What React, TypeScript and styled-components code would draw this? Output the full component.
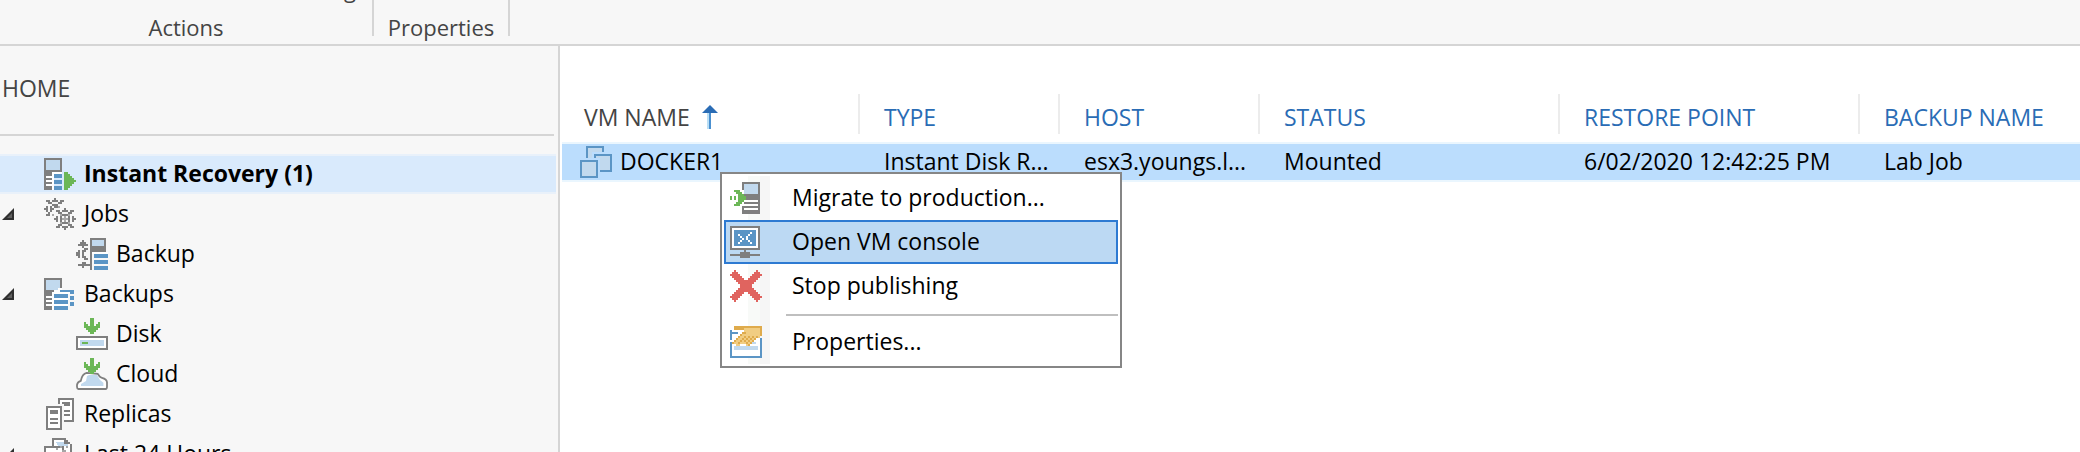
import React from "react";
import styled, { createGlobalStyle, css } from "styled-components";

const GRAY = "#7f7f7f";
const BLUE = "#5b95c5";
const PALE = "#c1d9ee";
const GREEN = "#6cb757";

const GlobalStyle = createGlobalStyle`
  *, *::before, *::after { box-sizing: border-box; }
  html, body, #root { height: 100%; margin: 0; }
  body {
    overflow: hidden;
    background: #fff;
    color: #000;
    font: 23px/32px "Open Sans", "Noto Sans", sans-serif;
  }
  button { font: inherit; color: inherit; background: none; border: 0; padding: 0; margin: 0; text-align: left; }
  a { color: inherit; text-decoration: none; }
`;

const Shell = styled.div`
  height: 100%;
  display: flex;
  flex-direction: column;
`;

const Ribbon = styled.header`
  flex: none;
  height: 46px;
  display: flex;
  overflow: hidden;
  background: #f7f7f7;
  border-bottom: 2px solid #d5d5d5;
  color: #444;
  font-size: 22px;
  line-height: 24px;
`;

const RibbonGroup = styled.section<{ $width: number }>`
  flex: none;
  width: ${(p) => p.$width}px;
  display: flex;
  flex-direction: column;
  justify-content: flex-end;
  align-items: center;
  gap: 14px;
  padding-bottom: 5px;
`;

const RibbonTool = styled.button`
  align-self: flex-end;
  margin-right: 16px;
`;

const RibbonCaption = styled.div`
  text-align: center;
`;

const RibbonRule = styled.div`
  flex: none;
  width: 2px;
  height: 36px;
  background: #d5d5d5;
`;

const Body = styled.div`
  flex: 1;
  min-height: 0;
  display: flex;
`;

const Sidebar = styled.nav`
  flex: none;
  width: 560px;
  overflow: hidden;
  background: #f7f7f7;
  border-right: 2px solid #d5d5d5;
`;

const SidebarTitle = styled.h1`
  height: 90px;
  margin: 0 4px 18px 0;
  padding: 26px 0 0 2px;
  border-bottom: 2px solid #d5d5d5;
  color: #444;
  font-size: 23px;
  font-weight: 400;
`;

const Tree = styled.ul`
  margin: 0 2px 0 0;
  padding: 0;
  list-style: none;
`;

const Node = styled.li<{ $level: number; $selected?: boolean }>`
  height: 40px;
  display: flex;
  align-items: center;
  padding-left: ${(p) => (p.$level - 1) * 32}px;
  ${(p) =>
    p.$selected &&
    css`
      background: #d9eafc;
      box-shadow: inset 0 2px #e9f1fa, inset 0 -2px #e9f1fa;
      font-weight: 700;
    `}
`;

const Twisty = styled.button`
  width: 44px;
  height: 40px;
  display: flex;
  align-items: center;
  padding-left: 2px;
`;

const Indent = styled.span`
  width: 44px;
`;

const NodeLink = styled.a`
  display: flex;
  align-items: center;
  gap: 8px;
  white-space: nowrap;
`;

const Label = styled.span`
  padding-bottom: 2px;
`;

const Main = styled.main`
  flex: 1;
  min-width: 0;
  overflow: hidden;
  padding: 48px 0 0 2px;
`;

const Grid = styled.table`
  width: 100%;
  table-layout: fixed;
  border-collapse: separate;
  border-spacing: 0;
`;

const Col = styled.col<{ $width?: number }>`
  width: ${(p) => (p.$width ? `${p.$width}px` : "auto")};
`;

const HeadCell = styled.th`
  height: 48px;
  padding: 0 0 8px;
  font-weight: 400;

  &:last-child > button { border-right: 0; }
`;

const SortButton = styled.button<{ $sorted?: boolean }>`
  width: 100%;
  height: 40px;
  display: flex;
  align-items: center;
  gap: 12px;
  padding: 5px 0 0 ${(p) => (p.$sorted ? 22 : 24)}px;
  border-right: 2px solid #ececec;
  color: ${(p) => (p.$sorted ? "#444" : "#2a6cb5")};
  white-space: nowrap;
`;

const Cell = styled.td`
  height: 40px;
  padding: 0 0 2px 24px;
  background: #bbddfd;
  border: solid #eaf6fe;
  border-width: 2px 0;
  white-space: nowrap;

  &:first-child { padding: 0 0 0 18px; }
`;

const NameCell = styled.div`
  display: flex;
  align-items: center;
  gap: 8px;
`;

const Menu = styled.div`
  position: absolute;
  left: 720px;
  top: 172px;
  width: 402px;
  padding: 2px;
  border: 2px solid #868686;
  background: linear-gradient(
    90deg,
    #fff 24px, #f8faf8 24px, #f8faf8 36px, #f6f6f6 36px, #f6f6f6 46px, #fff 46px
  ) content-box, #fff;
`;

const MenuItem = styled.button<{ $active?: boolean }>`
  width: 100%;
  height: 44px;
  display: flex;
  align-items: center;
  gap: 30px;
  padding-left: 4px;
  border: 2px solid ${(p) => (p.$active ? "#2d7ad2" : "transparent")};
  background: ${(p) => (p.$active ? "#bcd9f3" : "none")};
`;

const MenuRule = styled.hr`
  height: 2px;
  margin: 6px 0 4px 62px;
  border: 0;
  background: #bfbfbf;
`;

const IconSvg = styled.svg`
  flex: none;
  width: 32px;
  height: 32px;
  display: block;
`;

function Icon({ children, smooth }: { children: React.ReactNode; smooth?: boolean }) {
  return (
    <IconSvg viewBox="0 0 16 16" aria-hidden="true" shapeRendering={smooth ? "auto" : "crispEdges"}>
      {children}
    </IconSvg>
  );
}

const ServerBase = () => (
  <>
    <path fill={GRAY} d="M0 0h9v7H4v9H0z" />
    <path fill={PALE} d="M1 1h7v5H1z" />
    <path fill="#fff" d="M1 9h3v1H1zM1 11h3v1H1zM1 13h3v1H1zM4 7h5v1H5v8H4z" />
  </>
);

const RecoveryIcon = () => (
  <Icon>
    <ServerBase />
    <path fill={BLUE} d="M5 8h4v2H5zM5 11h4v2H5zM5 14h4v2H5z" />
    <path fill={GREEN} d="M10 7h2v1h1v1h1v1h1v1h1v1h-1v1h-1v1h-1v1h-1v1h-2z" />
  </Icon>
);

const BackupsIcon = () => (
  <Icon>
    <ServerBase />
    <path fill="#fff" d="M4 7h1V6h2V5h8v11H5V8H4z" />
    <path fill="#f7f7f7" d="M9 5h6v1H9zM12 8h3v8h-3z" />
    <path
      fill={BLUE}
      d="M8 6h7v2h-2V7H8zM5 8h7v2H5zM5 11h7v2H5zM5 14h7v2H5zM13 9h2v2h-2zM13 12h2v2h-2z"
    />
  </Icon>
);

const GearsIcon = () => (
  <Icon>
    <path
      fill={GRAY}
      d="M5 0h1v2H5zM4 1h3v1H4zM1 1h2v1h1v1H2V2H1zM8 1h2v1H9v1H7V2h1zM0 5h2v1H0zM1 4h1v3H1zM1 8h2v1H1zM2 7h1v1H2zM4 3h3v1H4zM3 4h1v3H3zM4 5h1v1H4zM5 4h2v1H5z"
    />
    <path
      fill={GRAY}
      d="M10 5h1v2h-1zM9 6h3v1H9zM10 14h1v2h-1zM9 14h3v1H9zM5 10h2v1H5zM6 9h1v3H6zM14 10h2v1h-2zM14 9h1v3h-1zM6 6h2v1h1v1H7V7H6zM13 6h2v1h-1v1h-2V7h1zM7 13h2v1H8v1H6v-1h1zM12 13h2v1h1v1h-2v-1h-1z"
    />
    <path fill={GRAY} d="M9 8h3v1H9zM8 9h1v3H8zM12 9h1v3h-1zM9 12h3v1H9z" />
    <path fill="#a9a9a9" d="M10 9h1v1h1v1h-1v1h-1v-1H9v-1h1zM8 8h1v1H8zM12 8h1v1h-1zM8 12h1v1H8zM12 12h1v1h-1zM4 8h1v1H4zM7 4h1v1H7z" />
  </Icon>
);

const JobIcon = () => (
  <Icon>
    <path fill={GRAY} d="M7 0h8v7H8v9H7v-2H6v-1h1z" />
    <path fill={PALE} d="M8 1h6v3H8z" />
    <path fill="#fff" d="M8 7h8v1H8z" />
    <path fill={BLUE} d="M9 8h7v2H9zM9 11h7v2H9zM9 14h7v2H9z" />
    <path
      fill={GRAY}
      d="M3 1h1v1h1v1h1v1H4v1H3V4H1V3h1V2h1zM3 15h1v-1h2v-1H5v-1H3v1H1v1h2zM0 7h1V6h1v4H1V9H0zM3 6h1V5h2v1H5v1H4v2h1v1h1v1H4v-1H3z"
    />
  </Icon>
);

const DownArrow = () => <path fill={GREEN} d="M7 0h2v4h1V3h1V2h1v3h-1v1h-1v1H9v1H7V7H6V6H5V5H4V2h1v1h1v1h1z" />;

const DiskIcon = () => (
  <Icon>
    <path fill={GRAY} d="M0 9h16v7H0z" />
    <path fill="#fff" d="M1 10h14v5H1z" />
    <path fill={PALE} d="M2 11h12v3H2z" />
    <path fill={GREEN} d="M3 12h3v1H3z" />
    <DownArrow />
  </Icon>
);

const CloudIcon = () => (
  <Icon smooth>
    <path
      fill="#fff"
      stroke={GRAY}
      strokeWidth="0.9"
      d="M1.2 15.5Q.5 15.4.5 14.4v-1Q.7 12 2.4 11.4 3 8 5.4 7.4L10.8 7.9Q12 9.8 13 9.9q2.400.6 2.500 2.300v2.200Q15.500 15.500 14.800 15.500z"
    />
    <path fill={PALE} d="M2.500 14V13L5 11.500 5.500 9l1-.5h4L12 11l1.700 1.400V14z" />
    <DownArrow />
  </Icon>
);

const ReplicasIcon = () => (
  <Icon>
    <path fill={GRAY} d="M7 0h8v12H7z" />
    <path fill="#fff" d="M8 1h6v10H8z" />
    <path fill={GRAY} d="M9 2h4v2H9zM10 6h3v1h-3zM10 8h3v1h-3z" />
    <path fill="#f7f7f7" d="M0 3h9v1H0zM9 3h1v13H9z" />
    <path fill={GRAY} d="M1 4h8v12H1z" />
    <path fill="#fff" d="M2 5h6v10H2z" />
    <path fill={GRAY} d="M3 6h4v2H3zM3 10h4v1H3zM3 12h4v1H3z" />
  </Icon>
);

const HistoryIcon = () => (
  <Icon>
    <path fill={GRAY} d="M4 0h7v1h1v1h1v1h1v9H4z" />
    <path fill="#fff" d="M5 1h5v2h3v8H5z" />
    <path fill={PALE} d="M6 2h4v1h2v1H7z" />
    <path fill={GRAY} d="M0 4h10v12H0z" />
    <path fill="#fff" d="M1 5h8v10H1z" />
    <path fill="#a5a5a5" d="M6 5h1v1H6zM8 4h1v1H8zM9 6h2v1H9zM11 4h1v1h-1zM5 7h1v1H5z" />
  </Icon>
);

const VmIcon = () => (
  <Icon>
    <path fill={BLUE} d="M3 0h9v6H3z" />
    <path fill={PALE} d="M4 1h7v5H4z" />
    <path fill="#bbddfd" d="M6 3h10v3H6zM0 6h10v3H0z" />
    <path fill={BLUE} d="M11 1h1v2h-1zM7 4h9v9H7z" />
    <path fill={PALE} d="M8 5h7v7H8z" />
    <path fill="#bbddfd" d="M7 6h3v8H7z" />
    <path fill={BLUE} d="M0 7h9v9H0z" />
    <path fill={PALE} d="M1 8h7v7H1z" />
  </Icon>
);

const MigrateIcon = () => (
  <Icon>
    <path fill={GRAY} d="M6 0h9v16H6z" />
    <path fill={PALE} d="M7 1h7v5H7z" />
    <path fill="#fff" d="M7 9h7v1H7zM7 11h7v1H7zM7 13h7v1H7zM6 4h1v2H6zM6 10h1v2H6z" />
    <path fill={GREEN} d="M0 7h1v2H0zM2 7h1v2H2zM2 4h3v1h1v1h1v1h1v2H7v1H6v1H5v1H2v-1h1v-1h1V6H3V5H2z" />
  </Icon>
);

const ConsoleIcon = () => (
  <Icon>
    <path fill={GRAY} d="M0 0h15v12H8v1h2v1h5v1h-5v1H5v-1H0v-1h5v-1h2v-1H0z" />
    <path fill="#fff" d="M1 1h13v10H1z" />
    <path fill={BLUE} d="M2 2h11v8H2z" />
    <path
      fill="#fff"
      d="M4 4h1v1H4zM5 5h1v1H5zM6 6h1v1H6zM5 7h1v1H5zM4 8h1v1H4zM10 3h1v1h-1zM9 4h1v1H9zM8 5h1v2H8zM9 7h1v1H9zM10 8h1v1h-1z"
    />
  </Icon>
);

const StopIcon = () => (
  <Icon>
    <path
      fill="#e0645f"
      d="M2 0h1v1h1v1h1v1h1v1h1v1h2V4h1V3h1V2h1V1h1V0h1v1h1v1h1v1h-1v1h-1v1h-1v1h-1v1h-1v2h1v1h1v1h1v1h1v1h1v1h-1v1h-1v1h-1v-1h-1v-1h-1v-1h-1v-1H9v-1H7v1H6v1H5v1H4v1H3v1H2v-1H1v-1H0v-1h1v-1h1v-1h1v-1h1V9h1V7H4V6H3V5H2V4H1V3H0V2h1V1h1z"
    />
  </Icon>
);

const PropertiesIcon = () => (
  <Icon>
    <path fill={BLUE} d="M0 2h1v1h3v1H1v3H0zM0 8h1v7h14V6h1v10H0z" />
    <path fill="#fff" d="M1 5h14v10H1z" />
    <path fill={PALE} d="M4 8h9v1H4zM2 10h12v2H2z" />
    <path fill="#f1cd82" d="M6 1h10v4h-1v1h-2v1h-1v1h-2v2H8V9H5v1H3V9H1V8h1V7h1V6h1V5h1V4h1V3h1V2H6z" />
    <path
      fill="#dfab4c"
      d="M2 0h14v5h-1V1H7v1H2zM6 3h2v1H6zM5 4h1v1H5zM4 5h1v1H4zM3 6h1v1H3zM2 7h1v1H2zM1 8h1v1H1zM6 6h1v1H6zM5 7h1v1H5zM4 8h1v1H4zM7 7h1v1H7zM8 8h1v1H8zM9 7h1v1H9zM8 6h1v1H8zM9 5h1v1H9zM10 6h1v1h-1zM11 7h1v1h-1zM12 6h1v1h-1zM11 5h1v1h-1zM10 8h1v1h-1zM9 9h1v1H9zM13 5h1v1h-1zM7 5h1v1H7z"
    />
  </Icon>
);

const TwistyIcon = () => (
  <svg width="12" height="12" viewBox="0 0 12 12" aria-hidden="true">
    <path fill="#303030" d="M12 0v12H0z" />
    <path fill="#606060" d="M10 5v5H5z" />
  </svg>
);

const SortArrow = () => (
  <svg width="16" height="24" viewBox="0 0 16 24" aria-label="ascending">
    <path fill="#2a6cb5" d="M8 0l8 8H0z" />
    <path fill="#4a90d0" d="M7 8h2v16H7z" />
    <path fill="#b9def5" d="M5 8h2v16H5z" />
  </svg>
);

const nodes = [
  { label: "Instant Recovery (1)", icon: <RecoveryIcon />, level: 1, selected: true },
  { label: "Jobs", icon: <GearsIcon />, level: 1, open: true },
  { label: "Backup", icon: <JobIcon />, level: 2 },
  { label: "Backups", icon: <BackupsIcon />, level: 1, open: true },
  { label: "Disk", icon: <DiskIcon />, level: 2 },
  { label: "Cloud", icon: <CloudIcon />, level: 2 },
  { label: "Replicas", icon: <ReplicasIcon />, level: 1 },
  { label: "Last 24 Hours", icon: <HistoryIcon />, level: 1, open: true },
];

const columns: { title: string; width?: number; sorted?: boolean }[] = [
  { title: "VM NAME", width: 298, sorted: true },
  { title: "TYPE", width: 200 },
  { title: "HOST", width: 200 },
  { title: "STATUS", width: 300 },
  { title: "RESTORE POINT", width: 300 },
  { title: "BACKUP NAME" },
];

const values = ["Instant Disk R...", "esx3.youngs.l...", "Mounted", "6/02/2020 12:42:25 PM", "Lab Job"];

export default function App() {
  return (
    <>
      <GlobalStyle />
      <Shell>
        <Ribbon>
          <RibbonGroup $width={372}>
            <RibbonTool type="button">Publishing</RibbonTool>
            <RibbonCaption>Actions</RibbonCaption>
          </RibbonGroup>
          <RibbonRule />
          <RibbonGroup $width={134}>
            <RibbonCaption>Properties</RibbonCaption>
          </RibbonGroup>
          <RibbonRule />
        </Ribbon>
        <Body>
          <Sidebar>
            <SidebarTitle>HOME</SidebarTitle>
            <Tree>
              {nodes.map((n) => (
                <Node key={n.label} $level={n.level} $selected={n.selected}>
                  {n.open ? (
                    <Twisty type="button" aria-label={`Collapse ${n.label}`}>
                      <TwistyIcon />
                    </Twisty>
                  ) : (
                    <Indent />
                  )}
                  <NodeLink href="#">
                    {n.icon}
                    <Label>{n.label}</Label>
                  </NodeLink>
                </Node>
              ))}
            </Tree>
          </Sidebar>
          <Main>
            <Grid>
              <colgroup>
                {columns.map((c) => (
                  <Col key={c.title} $width={c.width} />
                ))}
              </colgroup>
              <thead>
                <tr>
                  {columns.map((c) => (
                    <HeadCell key={c.title} scope="col">
                      <SortButton type="button" $sorted={c.sorted}>
                        {c.title}
                        {c.sorted && <SortArrow />}
                      </SortButton>
                    </HeadCell>
                  ))}
                </tr>
              </thead>
              <tbody>
                <tr>
                  <Cell>
                    <NameCell>
                      <VmIcon />
                      <Label>DOCKER1</Label>
                    </NameCell>
                  </Cell>
                  {values.map((v) => (
                    <Cell key={v}>{v}</Cell>
                  ))}
                </tr>
              </tbody>
            </Grid>
          </Main>
        </Body>
      </Shell>
      <Menu role="menu">
        <MenuItem type="button" role="menuitem">
          <MigrateIcon />
          <Label>Migrate to production...</Label>
        </MenuItem>
        <MenuItem type="button" role="menuitem" $active>
          <ConsoleIcon />
          <Label>Open VM console</Label>
        </MenuItem>
        <MenuItem type="button" role="menuitem">
          <StopIcon />
          <Label>Stop publishing</Label>
        </MenuItem>
        <MenuRule />
        <MenuItem type="button" role="menuitem">
          <PropertiesIcon />
          <Label>Properties...</Label>
        </MenuItem>
      </Menu>
    </>
  );
}
